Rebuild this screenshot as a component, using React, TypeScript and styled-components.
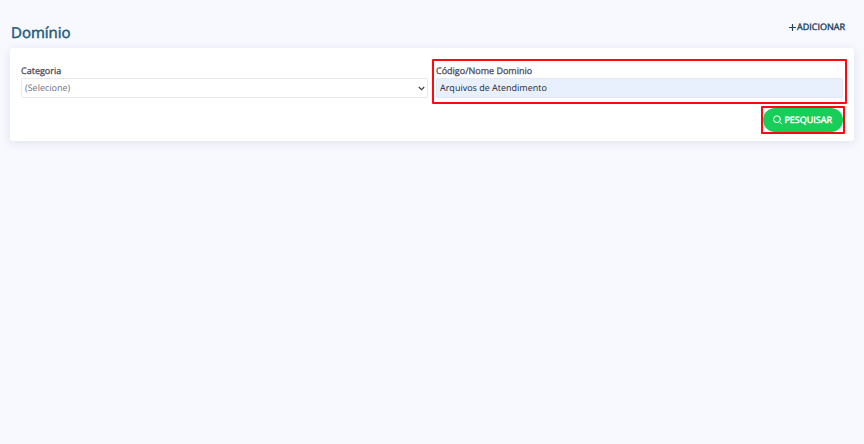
import React from "react";
import styled, { createGlobalStyle } from "styled-components";

const GlobalStyle = createGlobalStyle`
  *, *::before, *::after { box-sizing: border-box; }
  body {
    margin: 0;
    background: #f8f9ff;
    color: #4d4f5c;
    font-family: "Open Sans", "Noto Sans", sans-serif;
    font-size: 9px;
    text-rendering: geometricPrecision;
  }
  button, input, select { font: inherit; text-rendering: inherit; }
`;

const Page = styled.main`
  padding: 18px 10px;
`;

const Header = styled.header`
  display: flex;
  justify-content: space-between;
  align-items: flex-start;
  height: 30px;
  padding: 0 9px 0 1px;
`;

const Title = styled.h1`
  margin: 4px 0 0;
  color: #1f5b7c;
  font-size: 15px;
  font-weight: 400;
  line-height: 22px;
  -webkit-text-stroke: 0.5px currentColor;
`;

const AddButton = styled.button`
  display: flex;
  align-items: center;
  gap: 1px;
  padding: 0;
  border: 0;
  background: none;
  color: #24455c;
  font-weight: 400;
  line-height: 18px;
  -webkit-text-stroke: 0.4px currentColor;
  cursor: pointer;
`;

const Card = styled.form`
  padding: 16px 11px 9px;
  border-radius: 3px;
  background: #fff;
  box-shadow: 0 2px 10px rgba(60, 65, 100, 0.12);
`;

const Fields = styled.div`
  display: grid;
  grid-template-columns: 1fr 1fr;
  gap: 8px;
`;

const Field = styled.div`
  position: relative;
  display: flex;
  flex-direction: column;
`;

const Label = styled.label`
  color: #4d4b58;
  line-height: 14px;
  -webkit-text-stroke: 0.3px currentColor;
`;

const SelectWrap = styled.div`
  position: relative;
  display: flex;

  svg {
    position: absolute;
    top: 8px;
    right: 3px;
    pointer-events: none;
  }
`;

const Select = styled.select`
  appearance: none;
  width: 100%;
  height: 20px;
  padding: 0 12px 2px 3px;
  border: 1px solid #e8e9ee;
  border-radius: 2px;
  background: #fff;
  color: #70707c;
`;

const TextInput = styled.input`
  width: 100%;
  height: 20px;
  padding: 0 3px 2px;
  border: 1px solid #e2e7f2;
  border-radius: 2px;
  background: #e8f0fe;
  color: #25272e;
`;

const Highlight = styled.span<{ $inset: string }>`
  position: absolute;
  inset: ${({ $inset }) => $inset};
  border: 2px solid #ff0810;
  border-radius: 1px;
  pointer-events: none;
`;

const Actions = styled.div`
  display: flex;
  justify-content: flex-end;
  margin-top: 10px;
`;

const ActionSlot = styled.div`
  position: relative;
`;

const SearchButton = styled.button`
  display: flex;
  align-items: center;
  gap: 1px;
  height: 24px;
  padding: 0 11px 1px 10px;
  border: 0;
  border-radius: 12px;
  background: #17ce59;
  color: #fff;
  font-weight: 400;
  -webkit-text-stroke: 0.4px currentColor;
  cursor: pointer;
`;

const PlusIcon = () => (
  <svg width="7" height="7" viewBox="0 0 7 7" fill="none" stroke="currentColor" strokeWidth="1.2" aria-hidden="true">
    <path d="M3.5 0V7M0 3.5H7" />
  </svg>
);

const ChevronIcon = () => (
  <svg width="7" height="5" viewBox="0 0 7 5" fill="none" stroke="#3f4148" strokeWidth="1.2" aria-hidden="true">
    <path d="M0.8 1L3.5 3.7L6.2 1" />
  </svg>
);

const SearchIcon = () => (
  <svg width="10" height="10" viewBox="0 0 10 10" fill="none" stroke="currentColor" strokeLinecap="round" aria-hidden="true">
    <circle cx="4" cy="4.2" r="3.4" />
    <path d="M6.5 6.7L8.8 9" />
  </svg>
);

export default function App() {
  return (
    <>
      <GlobalStyle />
      <Page>
        <Header>
          <Title>Domínio</Title>
          <AddButton type="button">
            <PlusIcon />
            ADICIONAR
          </AddButton>
        </Header>
        <Card onSubmit={(event) => event.preventDefault()}>
          <Fields>
            <Field>
              <Label htmlFor="categoria">Categoria</Label>
              <SelectWrap>
                <Select id="categoria" defaultValue="">
                  <option value="">(Selecione)</option>
                </Select>
                <ChevronIcon />
              </SelectWrap>
            </Field>
            <Field>
              <Label htmlFor="dominio">Código/Nome Dominio</Label>
              <TextInput id="dominio" type="text" defaultValue="Arquivos de Atendimento" />
              <Highlight $inset="-5px -4px -6px" />
            </Field>
          </Fields>
          <Actions>
            <ActionSlot>
              <SearchButton type="submit">
                <SearchIcon />
                PESQUISAR
              </SearchButton>
              <Highlight $inset="-2px" />
            </ActionSlot>
          </Actions>
        </Card>
      </Page>
    </>
  );
}
